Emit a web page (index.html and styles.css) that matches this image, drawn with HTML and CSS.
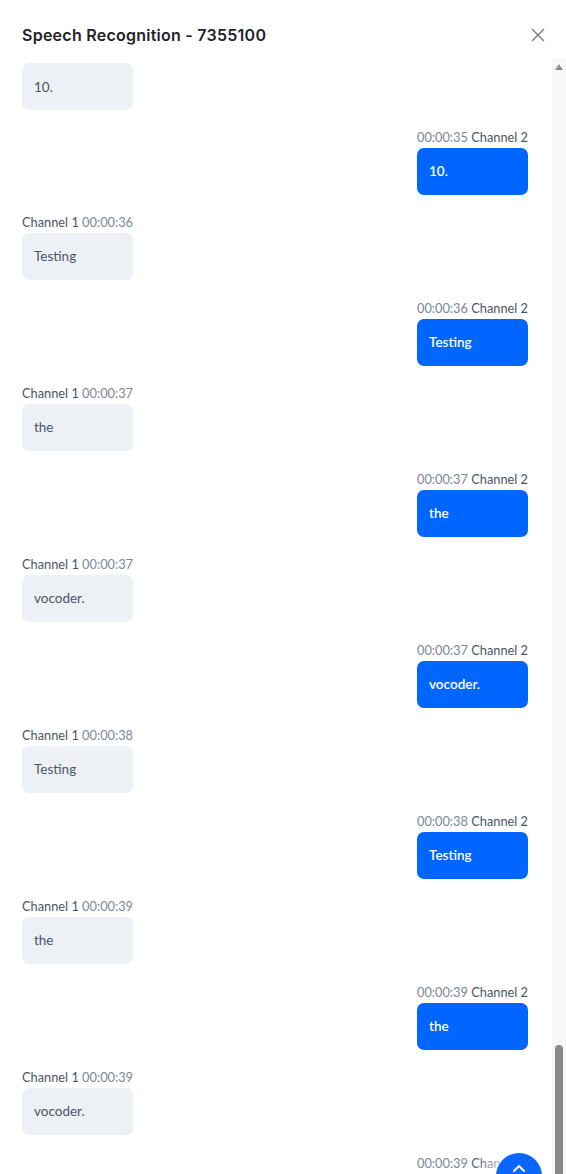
FILE: index.html
```html
<!DOCTYPE html>
<html lang="en">
<head>
<meta charset="utf-8">
<title>Speech Recognition - 7355100</title>
<link rel="stylesheet" href="styles.css">
</head>
<body>
<div class="dialog">
  <header class="header">
    <h1 class="title">Speech Recognition - 7355100</h1>
    <button class="close" aria-label="Close">
      <svg width="14" height="14" viewBox="0 0 14 14"><path d="M1 1L13 13M13 1L1 13" stroke="#7a7a7a" stroke-width="1.4" fill="none"/></svg>
    </button>
  </header>
  <div class="body">
    <div class="list">
      <div class="msg left first"><div class="bubble">10.</div></div>

      <div class="msg right"><div class="meta"><span class="time">00:00:35</span> <span class="ch">Channel 2</span></div><div class="bubble">10.</div></div>
      <div class="msg left"><div class="meta"><span class="ch">Channel 1</span> <span class="time">00:00:36</span></div><div class="bubble">Testing</div></div>
      <div class="msg right"><div class="meta"><span class="time">00:00:36</span> <span class="ch">Channel 2</span></div><div class="bubble">Testing</div></div>
      <div class="msg left"><div class="meta"><span class="ch">Channel 1</span> <span class="time">00:00:37</span></div><div class="bubble">the</div></div>
      <div class="msg right"><div class="meta"><span class="time">00:00:37</span> <span class="ch">Channel 2</span></div><div class="bubble">the</div></div>
      <div class="msg left"><div class="meta"><span class="ch">Channel 1</span> <span class="time">00:00:37</span></div><div class="bubble">vocoder.</div></div>
      <div class="msg right"><div class="meta"><span class="time">00:00:37</span> <span class="ch">Channel 2</span></div><div class="bubble">vocoder.</div></div>
      <div class="msg left"><div class="meta"><span class="ch">Channel 1</span> <span class="time">00:00:38</span></div><div class="bubble">Testing</div></div>
      <div class="msg right"><div class="meta"><span class="time">00:00:38</span> <span class="ch">Channel 2</span></div><div class="bubble">Testing</div></div>
      <div class="msg left"><div class="meta"><span class="ch">Channel 1</span> <span class="time">00:00:39</span></div><div class="bubble">the</div></div>
      <div class="msg right"><div class="meta"><span class="time">00:00:39</span> <span class="ch">Channel 2</span></div><div class="bubble">the</div></div>
      <div class="msg left"><div class="meta"><span class="ch">Channel 1</span> <span class="time">00:00:39</span></div><div class="bubble">vocoder.</div></div>
      <div class="msg right"><div class="meta"><span class="time">00:00:39</span> <span class="ch">Channel 2</span></div><div class="bubble">vocoder.</div></div>

      <button class="fab" aria-label="Scroll to top">
        <svg width="16" height="16" viewBox="0 0 16 16"><path d="M3 10L8 5L13 10" stroke="#fff" stroke-width="2" fill="none" stroke-linecap="round" stroke-linejoin="round"/></svg>
      </button>
    </div>
    <div class="scrollbar">
      <div class="arrow"></div>
      <div class="track"></div>
      <div class="thumb"></div>
    </div>
  </div>
</div>
</body>
</html>
```

FILE: styles.css
```css
* { box-sizing: border-box; }
html, body { margin: 0; padding: 0; background: #fff; }
body { width: 566px; height: 1174px; overflow: hidden; font-family: "Source Sans Pro", Lato, "Noto Sans", sans-serif; }

.dialog { display: flex; flex-direction: column; height: 1174px; }

.header {
  display: flex; align-items: center; justify-content: space-between;
  height: 58px; padding: 12px 21px 0 22px; flex: none;
}
.title {
  margin: 0; font-family: Inter, "Noto Sans", sans-serif; font-weight: 600;
  font-size: 16px; color: #1f2328; letter-spacing: 0.25px;
}
.close { border: 0; background: none; padding: 0; width: 14px; height: 14px; display: flex; cursor: pointer; }

.body { display: flex; flex: 1; min-height: 0; }

.list {
  position: relative; flex: 1; padding: 5px 24px 0 22px;
  display: flex; flex-direction: column; overflow: hidden;
}

.msg { display: flex; flex-direction: column; }
.msg.left { align-items: flex-start; margin-bottom: 20px; }
.msg.right { align-items: flex-end; margin-bottom: 19px; }
.msg.left.first { margin-bottom: 18.5px; }

.meta { font-size: 12.8px; line-height: 16px; margin-bottom: 3px; white-space: nowrap; }
.meta .ch { color: #4b5563; }
.meta .time { color: #7b8798; }

.bubble {
  width: 111px; height: 47px; border-radius: 7px;
  padding: 0 12px; display: flex; align-items: center;
  font-size: 13.5px;
}
.left .bubble { background: #edf1f5; color: #4a5568; }
.right .bubble { background: #0066ff; color: #fff; font-weight: 600; }

.fab {
  position: absolute; left: 496px; top: 1095px;
  width: 46px; height: 46px; border-radius: 50%; border: 0;
  background: #0a66ff; display: flex; align-items: center; justify-content: center;
  padding: 0 0 14px 0;
  box-shadow: 0 0 24px 10px rgba(255,255,255,0.85);
}

.scrollbar {
  width: 14px; flex: none; background: #f7f7f7; position: relative;
  display: flex; flex-direction: column; align-items: center;
}
.arrow {
  margin-top: 6px; width: 0; height: 0;
  border-left: 4px solid transparent; border-right: 4px solid transparent;
  border-bottom: 6px solid #8e8e8e;
}
.track { flex: 1; }
.thumb {
  position: absolute; left: 3px; top: 987px; width: 8px; height: 200px;
  background: #8a8a8a; border-radius: 4px;
}
```
